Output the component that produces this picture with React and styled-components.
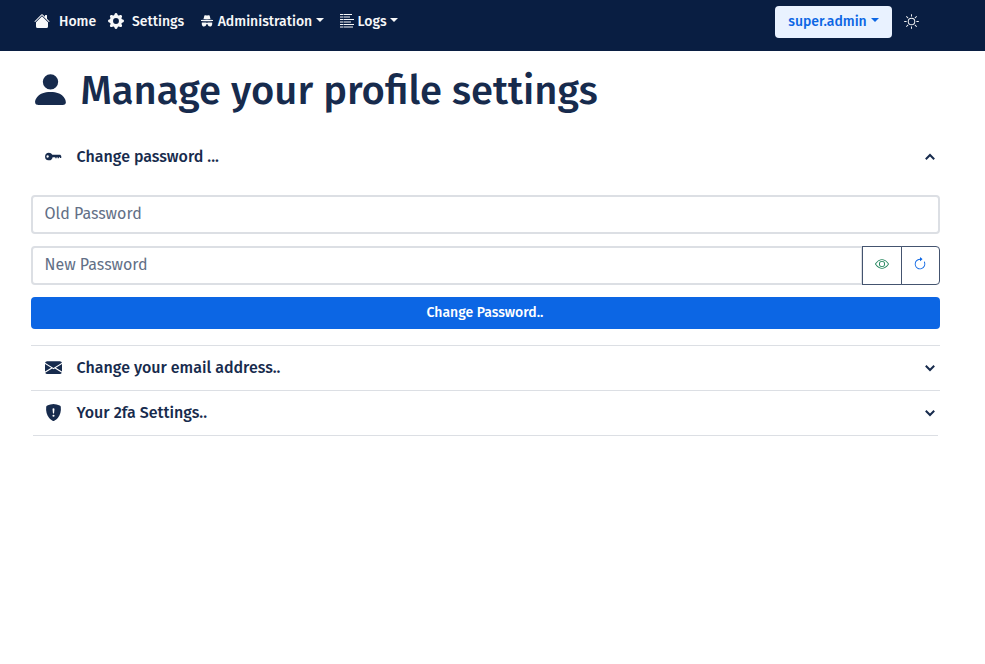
import React from "react";
import styled, { createGlobalStyle } from "styled-components";
import {
  BsHouseFill, BsGearFill, BsSun, BsPersonFill,
  BsEnvelopeFill, BsShieldFillExclamation, BsEye, BsArrowClockwise,
} from "react-icons/bs";

const GlobalStyle = createGlobalStyle`
  *, *::before, *::after { box-sizing: border-box; }
  body {
    margin: 0;
    background: #fff;
    color: #172b4d;
    font-family: "Fira Sans", "Noto Sans", sans-serif;
    font-size: 16px;
  }
  svg { display: block; flex: none; }
  button, input { font: inherit; letter-spacing: inherit; }
`;

const Navbar = styled.nav`
  height: 51px;
  background: #091e42;
  padding: 0 65px 9px 34px;
  display: flex;
  align-items: center;
  color: #f7f8f9;
  font-size: 14px;
  font-weight: 500;
`;
const NavItem = styled.a`
  display: flex;
  align-items: center;
  gap: ${(p) => p.$gap}px;
  margin-right: ${(p) => p.$after}px;
`;
const Label = styled.span`
  display: block;
  width: ${(p) => p.$w}px;
  white-space: nowrap;
`;
const Caret = styled.span`
  border: 4px solid transparent;
  border-top-color: currentColor;
  border-bottom: 0;
  margin-top: -2px;
`;
const UserButton = styled.button`
  width: 117px;
  height: 32px;
  margin: 2px 12px 0 auto;
  padding: 0 12px 1px 13px;
  border: 0;
  border-radius: 4px;
  background: #e9f2ff;
  color: #0c66e4;
  display: flex;
  align-items: center;
  gap: 4px;
  & > ${Caret} { margin-top: -4px; }
`;
const ThemeToggle = styled.span`
  width: 16px;
`;
const Main = styled.main`
  padding: 15px 45px 0 31px;
`;
const Title = styled.h1`
  height: 48px;
  margin: 0;
  display: flex;
  align-items: center;
  gap: 9.500px;
  font-size: 40px;
  font-weight: 500;
  line-height: 48px;
  & > svg { margin: -2px 0 0 -1px; }
  & > span { padding-top: 1px; }
`;
const Section = styled.section`
  border-bottom: 1px solid #dcdfe4;
`;
const LastSection = styled.section`
  &::after {
    content: "";
    display: block;
    height: 1px;
    margin: 0 2px;
    background: #dcdfe4;
  }
`;
const Header = styled.div`
  height: 44px;
  padding: 0 5px 2px 14px;
  display: flex;
  align-items: center;
  gap: 14.600px;
  font-weight: 500;
`;
const FirstHeader = styled(Header)`
  margin-top: 21px;
`;
const Chevron = styled.svg`
  width: 10px;
  height: 10px;
  margin-left: auto;
  margin-top: 1px;
  fill: none;
  stroke: currentColor;
  stroke-width: 2;
  transform: ${(p) => (p.$open ? "rotate(180deg)" : "none")};
`;
const Form = styled.form`
  padding: 16px 0;
  display: grid;
  gap: 12px;
`;
const Input = styled.input`
  height: 39px;
  width: 100%;
  min-width: 0;
  padding: 0 11.500px 2px;
  border: 2px solid #dcdfe4;
  border-radius: ${(p) => (p.$grouped ? "4px 0 0 4px" : "4px")};
  background: #fff;
  outline: 0;
  &::placeholder { color: #626f86; opacity: 1; }
`;
const InputGroup = styled.div`
  display: flex;
`;
const IconButton = styled.button`
  flex: none;
  width: ${(p) => (p.$last ? 39 : 40)}px;
  height: 39px;
  margin-left: -1px;
  padding: 0 1px 3px 0;
  border: 1px solid #44546f;
  border-radius: ${(p) => (p.$last ? "0 4px 4px 0" : "0")};
  background: #fff;
  color: ${(p) => p.$color};
  display: flex;
  align-items: center;
  justify-content: center;
  & > svg { margin-right: ${(p) => (p.$last ? 1 : 0)}px; }
`;
const Submit = styled.button`
  height: 32px;
  padding: 0 1px 1px 0;
  border: 0;
  border-radius: 4px;
  background: #0c66e4;
  color: #fff;
  font-size: 14px;
  font-weight: 500;
`;

function SectionChevron({ open }) {
  return (
    <Chevron $open={open} viewBox="0 0 10 10">
      <path d="M.8 2.800 5 7l4.200-4.200" />
    </Chevron>
  );
}

function HatGlassesIcon() {
  return (
    <svg width="12" height="12" viewBox="0 0 12 12" fill="currentColor">
      <path d="M3.400.6Q3.700 0 4.400.2L6 .6 7.600.2Q8.300 0 8.600.6L9.500 4h-7z" />
      <path d="M0 4.900Q6 3.900 12 4.900V6Q6 6.700 0 6z" />
      <path d="M.8 7.500h4.300l.9.5.9-.5h4.300v1.200q0 2.800-2.200 2.800-2 0-2.400-2.200H5.400Q5 11.500 3 11.500.8 11.500.8 8.700z" />
    </svg>
  );
}

function LogsIcon() {
  return (
    <svg width="14" height="14" viewBox="0 0 14 14" fill="none" stroke="currentColor" strokeWidth="1.200">
      <path d="M0 .5h3.500M0 3h3.500M0 5.500h3.500M0 8h3.500M0 10.500h3.500M0 13h3.500M4 .5h8M4 3h6M4 5.500h10M4 8h7M4 10.500h10M4 13h9" />
    </svg>
  );
}

function KeyIcon() {
  return (
    <svg width="17" height="17" viewBox="0 0 16 16" fill="currentColor" fillRule="evenodd">
      <path d="M3.700 4.400a3.600 3.600 0 0 1 3.200 2H14.400l.9 1.100v1.800h-1.200V8.700h-1v.9h-1.200v-.9h-1v.9H9.700v-.9H7.200A3.600 3.600 0 1 1 3.700 4.400zM2.500 6.900a1.100 1.100 0 1 0 0 2.200 1.100 1.100 0 0 0 0-2.200z" />
    </svg>
  );
}

export default function App() {
  return (
    <>
      <GlobalStyle />
      <Navbar>
        <NavItem $gap={9} $after={12}><BsHouseFill size={16} /><Label $w={37}>Home</Label></NavItem>
        <NavItem $gap={8} $after={17}><BsGearFill size={16} /><Label $w={52}>Settings</Label></NavItem>
        <NavItem $gap={4.7} $after={16}><HatGlassesIcon /><Label $w={93.6}>Administration</Label><Caret /></NavItem>
        <NavItem $gap={3.6} $after={0}><LogsIcon /><Label $w={28.4}>Logs</Label><Caret /></NavItem>
        <UserButton type="button"><Label $w={79}>super.admin</Label><Caret /></UserButton>
        <ThemeToggle><BsSun size={15} /></ThemeToggle>
      </Navbar>
      <Main>
        <Title><BsPersonFill size={41} /><Label $w={520}>Manage your profile settings</Label></Title>
        <Section>
          <FirstHeader><KeyIcon /><Label $w={145}>Change password ...</Label><SectionChevron open /></FirstHeader>
          <Form>
            <Input type="password" placeholder="Old Password" />
            <InputGroup>
              <Input type="password" placeholder="New Password" $grouped />
              <IconButton type="button" aria-label="Show password" $color="#1f845a"><BsEye size={14} /></IconButton>
              <IconButton type="button" aria-label="Generate password" $color="#0c66e4" $last><BsArrowClockwise size={14} /></IconButton>
            </InputGroup>
            <Submit type="button">Change Password..</Submit>
          </Form>
        </Section>
        <Section>
          <Header><BsEnvelopeFill size={17} /><Label $w={205}>Change your email address..</Label><SectionChevron /></Header>
        </Section>
        <LastSection>
          <Header><BsShieldFillExclamation size={17} /><Label $w={132}>Your 2fa Settings..</Label><SectionChevron /></Header>
        </LastSection>
      </Main>
    </>
  );
}
